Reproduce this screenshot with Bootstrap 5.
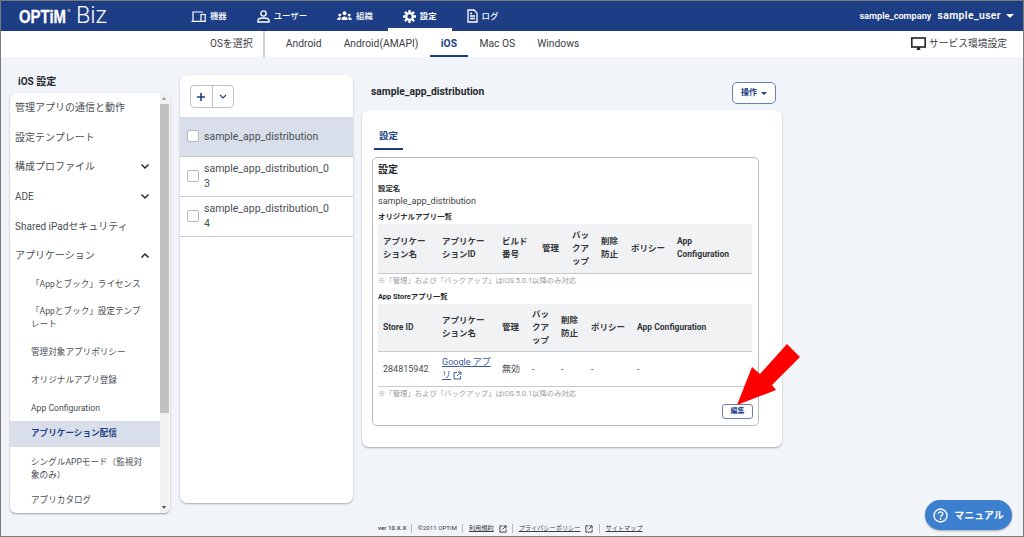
<!DOCTYPE html>
<html lang="ja"><head><meta charset="utf-8">
<link href="https://cdn.jsdelivr.net/npm/bootstrap@5.3.0/dist/css/bootstrap.min.css" rel="stylesheet">
<style>
html,body{height:100%;overflow:hidden}
body{font-family:Roboto,"Noto Sans CJK JP",sans-serif;font-size:11px;color:#3c4045;background:#f1f4f8}
.frame{position:relative;height:537px;border:1px solid #7a7a7a;overflow:hidden;display:flex;flex-direction:column}
.topbar{height:30px;background:#1d3e85;color:#fff;flex:none;padding-left:18px}
.logo-optim{width:157px;height:30px;flex:none}
.logo-a{font:700 19px "Liberation Sans",sans-serif;fill:#fff;stroke:#fff;stroke-width:.3}
.logo-b{font:300 24px Roboto,sans-serif;fill:#fff}
.topnav a{display:flex;align-items:center;gap:4px;height:30px;color:#fff;text-decoration:none;font-size:8.4px;font-weight:500;padding:0 15px;white-space:nowrap}
.topnav a.on{border-bottom:3px solid #fff;padding-top:3px;font-weight:700}
.who{font-size:9.2px;font-weight:600;padding-right:9px}
.who b{font-size:10.4px;font-weight:600;margin-left:6px;letter-spacing:.4px}
.who-caret{border-left:4px solid transparent;border-right:4px solid transparent;border-top:4px solid #fff;margin-left:5px}
.subbar{height:26px;background:#fff;flex:none;padding-left:209px;padding-right:16px;font-size:10.3px}
.subbar .os-lab{padding-right:10px;border-right:2px solid #ccd0d4;height:26px;line-height:26px;margin-right:10px;font-size:10px}
.subbar a{color:#3c4045;text-decoration:none;padding:0 11px;height:26px;line-height:26px;white-space:nowrap}
.subbar a.on{color:#1d3e85;font-weight:700;border-bottom:2px solid #1d3e85;margin:0 1px;padding:0 10.5px}
.svc{font-size:9.75px;gap:3px}
.mainrow{flex:1;min-height:0;position:relative}
.leftcol{width:170px;flex:none;padding:18px 0 0 9px}
.leftcol h6{font-size:10px;font-weight:700;margin:0 0 4px 8px;color:#26292d;line-height:14px}
.sidebox{height:420px;width:160px;background:#fff;border-radius:6px;box-shadow:0 1px 2px rgba(0,0,0,.35);overflow:hidden;display:flex}
.sidelist{flex:1;min-width:0;font-size:10px;color:#4a4e53}
.side-it{padding:0 5px;height:29.6px;display:flex;align-items:center;justify-content:space-between;white-space:nowrap}
.side-it svg{margin-right:5px}
.side-sub{padding:9.5px 14px 5.5px 21px;font-size:8.6px;line-height:13px}
.side-sub.tight{padding-top:7px;padding-bottom:5px}
.side-sub.on{background:#d8dfeb;color:#1d3e85;font-weight:700;padding-top:6.5px;padding-bottom:6.5px}
.side-sub.last{padding-top:6.5px;padding-bottom:6.5px}
.scrolltrack{width:9px;flex:none;background:#f1f1f1;position:relative;margin-right:1px}
.scrollthumb{position:absolute;top:11px;left:0;right:0;height:309px;background:#c1c1c1}
.scroll-up,.scroll-down{position:absolute;left:2px;border-left:2.5px solid transparent;border-right:2.5px solid transparent}
.scroll-up{top:4px;border-bottom:3px solid #9a9a9a}
.scroll-down{bottom:4px;border-top:3px solid #505050}
.listcard{width:173px;flex:none;margin:18px 0 0 9px;height:428px;background:#fff;border-radius:7px;box-shadow:0 1px 2px rgba(0,0,0,.3);overflow:hidden}
.addgrp{margin:10px 10px 9px;height:23px;width:44px;border:1px solid #bcc2ca;border-radius:4px;display:flex}
.addgrp i{flex:1;display:flex;align-items:center;justify-content:center}
.addgrp i+i{border-left:1px solid #bcc2ca}
.lrow{display:flex;align-items:center;border-bottom:1px solid #c6cbd2;padding:0 22px 1px 7px;font-size:10.5px;line-height:15px;color:#4a4e53;height:40px;word-break:break-all}
.lrow.on{background:#d8dfeb}
.cbx{width:12px;height:12px;border:1px solid #b4b8bd;border-radius:2px;background:#fff;flex:none;margin-right:5px}
.detail{width:420px;flex:none;margin-left:9px;padding-top:18px}
.dhead{height:35px;padding:7px 6px 0 9px}
.dhead strong{font-size:10.3px;font-weight:700;color:#26292d;margin-top:2px}
.opbtn{width:44px;height:22px;border:1px solid #6b80ad;border-radius:5px;color:#1d3e85;font-size:8px;font-weight:700;display:flex;align-items:center;justify-content:center;gap:4px;background:#fff}
.caret{display:inline-block;border-left:3px solid transparent;border-right:3px solid transparent;border-top:3px solid currentColor}
.dcard{background:#fff;height:337px;border-radius:7px;box-shadow:0 1px 2px rgba(0,0,0,.3);padding:8px 23px 0 10px}
.tabbit{display:inline-block;margin-left:2px;padding:0 5px;height:32px;line-height:36px;color:#1d3e85;font-size:9.5px;font-weight:700;border-bottom:2px solid #1d3e85}
.incard{border:1px solid #b7bcc3;border-radius:5px;margin-top:7px;height:269px;padding:5px 6px 0 5px;width:387px;position:relative}
.incard h5{font-size:10px;font-weight:700;margin:0 0 7px;line-height:14px;color:#26292d}
.lab{font-size:7.4px;font-weight:700;color:#26292d;line-height:10px}
.val{font-size:9px;line-height:15px;margin-bottom:3px}
.tbl{width:374px;table-layout:fixed;border-collapse:collapse;font-size:8.5px;margin-top:2px}
.tbl th{background:#f1f2f4;font-weight:700;color:#33363a;padding:0 5px;line-height:13px;vertical-align:middle}
.tbl th.wrapcol{padding-right:18px}
.tbl thead tr{border-bottom:1px solid #c6cbd2}
.tbl td{padding:0 5px;line-height:13px;font-size:9px;color:#4a4e53;vertical-align:middle}
.tbl tbody tr{height:35px;border-bottom:1px solid #c6cbd2}
.hd1{height:49px}.hd2{height:48px}
.note{font-size:7.35px;color:#9a9da1;line-height:14px;margin-bottom:4px}
.tbl a{color:#3a5a9c}
.editb{position:absolute;right:5px;bottom:6px;width:31px;height:15px;border:1px solid #6b80ad;border-radius:3px;font-size:7px;font-weight:700;color:#1d3e85;display:flex;align-items:center;justify-content:center;background:#fff}
.foot{position:absolute;left:377px;top:523px;font-size:6.2px;white-space:nowrap;color:#3c4045}
.foot span{padding:0 5.5px;border-left:1px solid #bbb;display:inline-flex;align-items:center;gap:5px}
.foot span:first-child{border:0;padding-left:0;padding-right:5px;font-weight:500}
.foot u{color:#3c4045}
.manual{position:absolute;right:11px;top:499px;width:87px;height:30px;border-radius:15px;background:#3b7fce;color:#fff;font-size:10px;font-weight:700;display:flex;align-items:center;justify-content:center;gap:6px;box-shadow:0 1px 2px rgba(0,0,0,.3)}
.arrow{position:absolute;left:719px;top:339px}
</style></head><body>
<div class="frame">
<div class="topbar d-flex align-items-center">
 <svg class="logo-optim" viewBox="19 1 157 30"><text class="logo-a" x="19" y="23" textLength="47" lengthAdjust="spacingAndGlyphs">OPTiM</text><circle cx="69" cy="10.500" r="1.200" fill="none" stroke="#fff" stroke-width=".6"/><text class="logo-b" x="76" y="23" textLength="31" lengthAdjust="spacingAndGlyphs">Biz</text></svg>
 <div class="topnav d-flex">
  <a href="#"><svg width="15" height="11" viewBox="0 0 15 11"><path d="M.5 10.300h14M2 10V1h10" fill="none" stroke="#fff" stroke-width="1.200"/><rect x="10" y="3.500" width="4.200" height="6.800" fill="#1d3e85" stroke="#fff" stroke-width="1.200"/></svg>機器</a>
  <a href="#"><svg width="13" height="13" viewBox="0 0 13 13"><circle cx="6.500" cy="3.500" r="2.600" fill="none" stroke="#fff" stroke-width="1.400"/><path d="M1 12v-1.500C1 9 3 8 6.500 8s5.500 1 5.500 2.500V12z" fill="none" stroke="#fff" stroke-width="1.400"/></svg>ユーザー</a>
  <a href="#"><svg width="15" height="10" viewBox="0 0 16 11" fill="#fff"><circle cx="8" cy="2.500" r="2.200"/><circle cx="2.800" cy="4.500" r="1.600"/><circle cx="13.200" cy="4.500" r="1.600"/><path d="M4.500 10c0-3 1.500-4 3.500-4s3.500 1 3.500 4zM0 10c0-2 1-3 2.800-3 .6 0 1 .1 1.300.3C3.500 8 3.300 9 3.300 10zM16 10c0-2-1-3-2.800-3-.6 0-1 .1-1.300.3.600.7.800 1.700.800 2.700z"/></svg>組織</a>
  <a href="#" class="on"><svg width="13" height="13" viewBox="0 0 13 13"><circle cx="6.500" cy="6.500" r="3.300" fill="none" stroke="#fff" stroke-width="2.200"/><path d="M6.500 0v3M6.500 10v3M0 6.500h3M10 6.500h3M1.900 1.900l2.100 2.100M9 9l2.100 2.100M1.900 11.100L4 9M9 4l2.100-2.100" stroke="#fff" stroke-width="2.300"/></svg>設定</a>
  <a href="#"><svg width="11" height="14" viewBox="0 0 11 14"><path d="M1 1h6l3 3v9H1zM3 7h5M3 9.500h5M3 4.500h2" fill="none" stroke="#fff" stroke-width="1.300"/></svg>ログ</a>
 </div>
 <div class="who ms-auto d-flex align-items-center">sample_company<b>sample_user</b><span class="who-caret"></span></div>
</div>
<div class="subbar d-flex align-items-center">
 <div class="os-lab">OSを選択</div>
 <a href="#">Android</a><a href="#">Android(AMAPI)</a><a href="#" class="on">iOS</a><a href="#">Mac OS</a><a href="#">Windows</a>
 <div class="svc ms-auto d-flex align-items-center"><svg width="15" height="14" viewBox="0 0 15 14"><rect x=".8" y="1" width="13.400" height="9" fill="none" stroke="#222" stroke-width="1.600"/><path d="M5.500 13l1-3h2l1 3z" fill="#222"/></svg>サービス環境設定</div>
</div>
<div class="mainrow d-flex">
 <div class="leftcol">
  <h6>iOS 設定</h6>
  <div class="sidebox">
   <div class="sidelist">
    <div class="side-it">管理アプリの通信と動作</div>
    <div class="side-it">設定テンプレート</div>
    <div class="side-it">構成プロファイル<svg width="10" height="7" viewBox="0 0 10 7"><path d="M1.500 1.500L5 5l3.500-3.500" fill="none" stroke="#26292d" stroke-width="1.500"/></svg></div>
    <div class="side-it">ADE<svg width="10" height="7" viewBox="0 0 10 7"><path d="M1.500 1.500L5 5l3.500-3.500" fill="none" stroke="#26292d" stroke-width="1.500"/></svg></div>
    <div class="side-it">Shared iPadセキュリティ</div>
    <div class="side-it">アプリケーション<svg width="10" height="7" viewBox="0 0 10 7"><path d="M1.500 5.500L5 2l3.500 3.500" fill="none" stroke="#26292d" stroke-width="1.500"/></svg></div>
    <div class="side-sub tight">「Appとブック」ライセンス</div>
    <div class="side-sub">「Appとブック」設定テンプレート</div>
    <div class="side-sub">管理対象アプリポリシー</div>
    <div class="side-sub">オリジナルアプリ登録</div>
    <div class="side-sub">App Configuration</div>
    <div class="side-sub on">アプリケーション配信</div>
    <div class="side-sub">シングルAPPモード（監視対象のみ）</div>
    <div class="side-sub last">アプリカタログ</div>
   </div>
   <div class="scrolltrack"><span class="scroll-up"></span><div class="scrollthumb"></div><span class="scroll-down"></span></div>
  </div>
 </div>
 <div class="listcard">
  <div class="addgrp"><i><svg width="10" height="10" viewBox="0 0 10 10"><path d="M5 1v8M1 5h8" stroke="#1d3e85" stroke-width="1.600"/></svg></i><i><svg width="8" height="5" viewBox="0 0 8 5"><path d="M1 1l3 3 3-3" fill="none" stroke="#1d3e85" stroke-width="1.100"/></svg></i></div>
  <div class="lrow on"><span class="cbx"></span><span>sample_app_distribution</span></div>
  <div class="lrow"><span class="cbx"></span><span>sample_app_distribution_03</span></div>
  <div class="lrow"><span class="cbx"></span><span>sample_app_distribution_04</span></div>
 </div>
 <div class="detail">
  <div class="dhead d-flex justify-content-between"><strong>sample_app_distribution</strong><div class="opbtn">操作<span class="caret"></span></div></div>
  <div class="dcard">
   <div class="tabbit">設定</div>
   <div class="incard">
    <h5>設定</h5>
    <div class="lab">設定名</div>
    <div class="val">sample_app_distribution</div>
    <div class="lab">オリジナルアプリ一覧</div>
    <table class="tbl">
     <colgroup><col style="width:59px"><col style="width:60px"><col style="width:40px"><col style="width:30px"><col style="width:29px"><col style="width:30px"><col style="width:46px"><col></colgroup>
     <thead><tr class="hd1"><th>アプリケーション名</th><th>アプリケーションID</th><th>ビルド番号</th><th>管理</th><th>バックアップ</th><th>削除防止</th><th>ポリシー</th><th class="wrapcol">App Configuration</th></tr></thead>
    </table>
    <div class="note">※「管理」および「バックアップ」はiOS 5.0.1以降のみ対応</div>
    <div class="lab">App Storeアプリ一覧</div>
    <table class="tbl">
     <colgroup><col style="width:59px"><col style="width:60px"><col style="width:30px"><col style="width:29px"><col style="width:30px"><col style="width:46px"><col></colgroup>
     <thead><tr class="hd2"><th>Store ID</th><th>アプリケーション名</th><th>管理</th><th>バックアップ</th><th>削除防止</th><th>ポリシー</th><th>App Configuration</th></tr></thead>
     <tbody><tr><td>284815942</td><td><a href="#">Google アプリ</a> <svg width="9" height="9" viewBox="0 0 9 9"><path d="M4 1.500H1v6.500h6.500V5M5 1h3v3M8 1L4 5" fill="none" stroke="#3a5a9c" stroke-width="1"/></svg></td><td>無効</td><td>-</td><td>-</td><td>-</td><td>-</td></tr></tbody>
    </table>
    <div class="note">※「管理」および「バックアップ」はiOS 5.0.1以降のみ対応</div>
    <div class="editb">編集</div>
   </div>
  </div>
 </div>
</div>
<div class="foot"><span>ver 10.X.X</span><span>©2011 OPTiM</span><span><u>利用規約</u><svg width="8" height="8" viewBox="0 0 9 9"><path d="M4 1H1v7h7V5M5 1h3v3M8 1L4 5" fill="none" stroke="#333"/></svg></span><span><u>プライバシーポリシー</u><svg width="8" height="8" viewBox="0 0 9 9"><path d="M4 1H1v7h7V5M5 1h3v3M8 1L4 5" fill="none" stroke="#333"/></svg></span><span><u>サイトマップ</u></span></div>
<div class="manual"><svg width="15" height="15" viewBox="0 0 15 15"><circle cx="7.500" cy="7.500" r="6.500" fill="none" stroke="#fff" stroke-width="1.400"/><path d="M5.300 6c0-1.400 1-2.200 2.200-2.200S9.800 4.600 9.800 5.800c0 1.700-2.300 1.800-2.300 3.500" fill="none" stroke="#fff" stroke-width="1.300"/><circle cx="7.500" cy="11" r=".9" fill="#fff"/></svg>マニュアル</div>
<svg class="arrow" width="82" height="70" viewBox="720 340 82 70"><path d="M737 405L752 367L760 374L787 344L800 357L772 385L776 390Z" fill="#f00"/></svg>
</div>
<script src="https://cdn.jsdelivr.net/npm/bootstrap@5.3.0/dist/js/bootstrap.bundle.min.js"></script>
</body></html>
